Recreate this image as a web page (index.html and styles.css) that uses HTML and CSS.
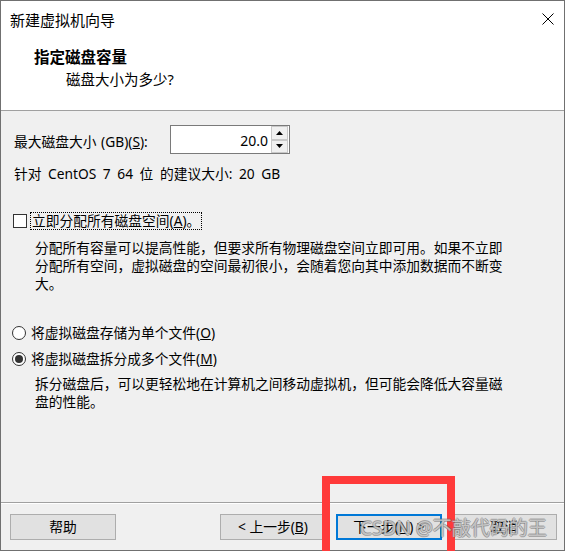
FILE: index.html
```html
<!DOCTYPE html>
<html lang="zh-CN">
<head>
<meta charset="utf-8">
<title>新建虚拟机向导</title>
<link rel="stylesheet" href="styles.css">
</head>
<body>
<div class="window">
  <div class="titlebar">
    <span class="title">新建虚拟机向导</span>
    <svg class="close" width="12" height="12" viewBox="0 0 12 12"><path d="M0.5 0.5 L11.5 11.5 M11.5 0.5 L0.5 11.5" stroke="#000" stroke-width="1" fill="none"/></svg>
  </div>
  <div class="header">
    <div class="h-title">指定磁盘容量</div>
    <div class="h-sub">磁盘大小为多少?</div>
  </div>
  <div class="content">
    <div class="size-row">
      <span class="size-label">最大磁盘大小 (GB)(<u>S</u>):</span>
      <div class="spin">
        <span class="spin-value">20.0</span>
        <div class="spin-btns">
          <div class="spin-btn"><svg width="7" height="4" viewBox="0 0 7 4"><path d="M3.5 0 L7 4 L0 4 Z" fill="#000"/></svg></div>
          <div class="spin-btn"><svg width="7" height="4" viewBox="0 0 7 4"><path d="M0 0 L7 0 L3.5 4 Z" fill="#000"/></svg></div>
        </div>
      </div>
    </div>
    <div class="hint">针对 CentOS 7 64 位 的建议大小: 20 GB</div>
    <div class="check-row">
      <span class="checkbox"></span>
      <span class="focus-label">立即分配所有磁盘空间(<u>A</u>)。</span>
    </div>
    <p class="desc">分配所有容量可以提高性能，但要求所有物理磁盘空间立即可用。如果不立即分配所有空间，虚拟磁盘的空间最初很小，会随着您向其中添加数据而不断变大。</p>
    <div class="radio-row first">
      <span class="radio"></span>
      <span>将虚拟磁盘存储为单个文件(<u>O</u>)</span>
    </div>
    <div class="radio-row">
      <span class="radio checked"></span>
      <span>将虚拟磁盘拆分成多个文件(<u>M</u>)</span>
    </div>
    <p class="desc desc-split">拆分磁盘后，可以更轻松地在计算机之间移动虚拟机，但可能会降低大容量磁盘的性能。</p>
  </div>
  <div class="footer">
    <button class="btn">帮助</button>
    <span class="spacer"></span>
    <button class="btn">&lt; 上一步(<u>B</u>)</button>
    <button class="btn btn-default">下一步(<u>N</u>) &gt;</button>
    <button class="btn btn-cancel">取消</button>
  </div>
  <div class="annot"></div>
  <div class="watermark">CSDN @不敲代码的王</div>
</div>
</body>
</html>
```

FILE: styles.css
```css
html, body {
  margin: 0;
  padding: 0;
  background: #ffffff;
  overflow: hidden;
}

body {
  font-family: "Noto Sans", "Noto Sans CJK SC", sans-serif;
  color: #000;
}

.window {
  position: relative;
  width: 565px;
  height: 551px;
  box-sizing: border-box;
  border: 1px solid #707070;
  display: flex;
  flex-direction: column;
  background: #f0f0f0;
}

.titlebar {
  height: 39px;
  background: #fff;
  display: flex;
  justify-content: space-between;
  padding: 0 10px 0 9px;
}

.title {
  font-size: 15px;
  line-height: 39px;
}

.close {
  margin-top: 12px;
}

.header {
  background: #fff;
  padding: 6px 0 20px 0;
  border-bottom: 1px solid #a0a0a0;
}

.h-title {
  font-size: 15.5px;
  font-weight: bold;
  line-height: 22px;
  padding-left: 33px;
}

.h-sub {
  font-size: 14.5px;
  line-height: 22px;
  padding-left: 65px;
}

.content {
  flex: 1;
  padding-left: 12px;
  font-size: 13.75px;
}

.size-row {
  margin-top: 14px;
  display: flex;
  align-items: center;
  height: 29px;
}

.size-label {
  width: 156px;
  padding-left: 1px;
  padding-top: 4px;
  line-height: 20px;
  word-spacing: 1px;
}

.spin {
  width: 120px;
  height: 29px;
  box-sizing: border-box;
  border: 1px solid #7a7a7a;
  background: #fff;
  display: flex;
  justify-content: flex-end;
  align-items: center;
}

.spin-value {
  font-size: 14px;
  padding-right: 3px;
  padding-top: 1px;
}

.spin-btns {
  width: 17px;
  height: 27px;
  display: flex;
  flex-direction: column;
  margin-right: 1px;
}

.spin-btn {
  flex: 1;
  box-sizing: border-box;
  border: 1px solid #c8c8c8;
  background: #f0f0f0;
  display: flex;
  align-items: center;
  justify-content: center;
}

.hint {
  margin-top: 10px;
  line-height: 20px;
  padding-left: 1px;
  word-spacing: 3px;
}

.check-row {
  margin-top: 28px;
  display: flex;
  align-items: center;
  height: 18px;
}

.checkbox {
  width: 14px;
  height: 14px;
  box-sizing: border-box;
  border: 1px solid #333;
  background: #fff;
  margin-right: 3px;
}

.focus-label {
  border: 1px dotted #000;
  line-height: 16px;
  padding: 0 1px;
}

.desc {
  margin: 9px 0 0 0;
  padding-left: 22px;
  width: 472px;
  line-height: 18px;
}

.radio-row {
  display: flex;
  align-items: center;
  line-height: 20px;
  margin-top: 6px;
}

.radio-row.first {
  margin-top: 30px;
}

.radio {
  width: 14px;
  height: 14px;
  box-sizing: border-box;
  border: 1px solid #333;
  border-radius: 50%;
  background: #fff;
  margin-left: -1px;
  margin-right: 5px;
  display: flex;
  align-items: center;
  justify-content: center;
}

.radio.checked::after {
  content: "";
  width: 8px;
  height: 8px;
  border-radius: 50%;
  background: #333;
}

.desc-split {
  margin-top: 6px;
}

.footer {
  height: 48px;
  box-sizing: border-box;
  border-top: 1px solid #a0a0a0;
  box-shadow: inset 0 1px #fff;
  padding: 11px 7px 0 9px;
  display: flex;
  align-items: flex-start;
}

.spacer {
  flex: 1;
}

.btn {
  width: 106px;
  height: 26px;
  box-sizing: border-box;
  border: 1px solid #adadad;
  background: #e1e1e1;
  font-family: "Noto Sans", "Noto Sans CJK SC", sans-serif;
  font-size: 13.75px;
  color: #000;
  padding: 0;
  line-height: 22px;
}

.btn-default {
  border: 2px solid #0078d7;
  margin-left: 10px;
}

.btn-cancel {
  margin-left: 9px;
}

.annot {
  position: absolute;
  left: 321px;
  top: 475px;
  width: 133px;
  height: 90px;
  box-sizing: border-box;
  border: 8px solid #ff3a3a;
}

.watermark {
  position: absolute;
  left: 359px;
  top: 514px;
  font-family: "Noto Sans", "Noto Sans CJK SC", sans-serif;
  font-size: 19px;
  line-height: 26px;
  color: rgba(255, 255, 255, 0.55);
  text-shadow: 1px 0 0 rgba(110, 110, 110, 0.5), -1px 0 0 rgba(110, 110, 110, 0.5), 0 1px 0 rgba(110, 110, 110, 0.5), 0 -1px 0 rgba(110, 110, 110, 0.5);
  white-space: nowrap;
}
```
